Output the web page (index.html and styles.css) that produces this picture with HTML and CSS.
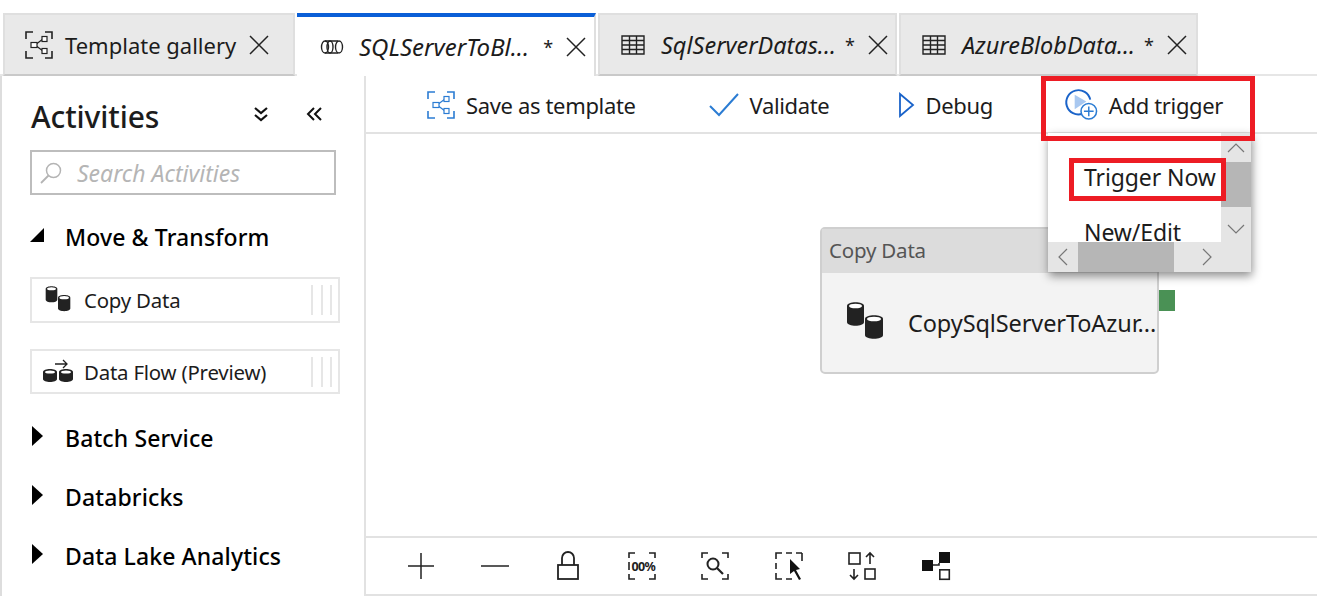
FILE: index.html
```html
<!DOCTYPE html>
<html lang="en">
<head>
<meta charset="utf-8">
<title>Pipeline editor</title>
<link rel="stylesheet" href="styles.css">
</head>
<body>
<svg class="defs" width="0" height="0">
  <defs>
    <symbol id="tpl" viewBox="0 0 28 28">
      <path d="M1 8V1h7M20 1h7v7M27 20v7h-7M8 27H1v-7" fill="none" stroke="currentColor" stroke-width="1.6"/>
      <path d="M10 14l8-6M10 14l8 6" fill="none" stroke="currentColor" stroke-width="1.2"/>
      <rect x="6" y="11.5" width="6" height="5" fill="#fff" stroke="currentColor" stroke-width="1.2"/>
      <rect x="17" y="5.5" width="5" height="5" fill="#fff" stroke="currentColor" stroke-width="1.2"/>
      <rect x="17" y="17.5" width="5" height="5" fill="#fff" stroke="currentColor" stroke-width="1.2"/>
    </symbol>
    <symbol id="close" viewBox="0 0 20 20">
      <path d="M1 1l18 18M19 1L1 19" fill="none" stroke="#222" stroke-width="1.5"/>
    </symbol>
    <symbol id="table" viewBox="0 0 24 20">
      <path d="M1 1h22v18H1zM1 5.500h22M1 10h22M1 14.500h22M8.500 1v18M15.500 1v18" fill="none" stroke="#222" stroke-width="1.400"/>
    </symbol>
    <symbol id="db2" viewBox="0 0 38 38">
      <path d="M1 4c0-5 17-5 17 0v16c0 5-17 5-17 0z" fill="#222"/>
      <ellipse cx="9.500" cy="4" rx="6.500" ry="2.300" fill="#fff"/>
      <path d="M19 17c0-5 18-5 18 0v16c0 5-18 5-18 0z" fill="#222"/>
      <ellipse cx="28" cy="17" rx="7" ry="2.300" fill="#fff"/>
    </symbol>
  </defs>
</svg>

<nav class="tabs">
  <div class="tab tab-gallery">
    <svg class="ic-tpl"><use href="#tpl"/></svg>
    <span class="tab-label tab-label-plain">Template gallery</span>
    <svg class="ic-close"><use href="#close"/></svg>
  </div>
  <div class="tab tab-active">
    <svg class="ic-pipe" viewBox="0 0 24 16">
      <path d="M5 2h13M5 14h13" fill="none" stroke="#222" stroke-width="1.400"/>
      <ellipse cx="5" cy="8" rx="3.500" ry="6" fill="none" stroke="#222" stroke-width="1.400"/>
      <ellipse cx="10" cy="8" rx="3" ry="6" fill="none" stroke="#222" stroke-width="1.400"/>
      <ellipse cx="19" cy="8" rx="3.500" ry="6" fill="none" stroke="#222" stroke-width="1.400"/>
    </svg>
    <span class="tab-label">SQLServerToBl...</span>
    <span class="tab-star">*</span>
    <svg class="ic-close"><use href="#close"/></svg>
  </div>
  <div class="tab tab-data">
    <svg class="ic-table"><use href="#table"/></svg>
    <span class="tab-label">SqlServerDatas...</span>
    <span class="tab-star">*</span>
    <svg class="ic-close"><use href="#close"/></svg>
  </div>
  <div class="tab tab-data">
    <svg class="ic-table"><use href="#table"/></svg>
    <span class="tab-label">AzureBlobData...</span>
    <span class="tab-star">*</span>
    <svg class="ic-close"><use href="#close"/></svg>
  </div>
</nav>

<div class="workspace">
  <aside class="sidebar">
    <header class="side-head">
      <h2 class="side-title">Activities</h2>
      <svg class="ic-expand" viewBox="0 0 16 16"><path d="M2 2l6 5 6-5M2 9l6 5 6-5" fill="none" stroke="#111" stroke-width="2.200"/></svg>
      <svg class="ic-collapse" viewBox="0 0 16 16"><path d="M8 2L2 8l6 6M15 2L9 8l6 6" fill="none" stroke="#111" stroke-width="2"/></svg>
    </header>
    <div class="search">
      <svg class="ic-search" viewBox="0 0 22 22"><circle cx="13.500" cy="8.500" r="7" fill="none" stroke="#b4b4b4" stroke-width="1.500"/><path d="M8.500 13.500L1 21" fill="none" stroke="#b4b4b4" stroke-width="1.800"/></svg>
      <span class="search-text">Search Activities</span>
    </div>
    <div class="group group-open">
      <svg class="ic-tri-open" viewBox="0 0 14 14"><path d="M14 0v14H0z" fill="#000"/></svg>
      <span>Move &amp; Transform</span>
    </div>
    <div class="item item-copy">
      <svg class="ic-db-small"><use href="#db2"/></svg>
      <span class="item-label">Copy Data</span>
      <span class="grip"></span>
    </div>
    <div class="item item-flow">
      <svg class="ic-flow" viewBox="0 0 30 24">
        <path d="M12 5h12M20 1l4 4-4 4" fill="none" stroke="#222" stroke-width="1.300"/>
        <path d="M0 13c0-4 14-4 14 0v7c0 4-14 4-14 0z" fill="#222"/>
        <path d="M16 13c0-4 14-4 14 0v7c0 4-14 4-14 0z" fill="#222"/>
        <ellipse cx="7" cy="13" rx="5" ry="1.600" fill="#fff"/>
        <ellipse cx="23" cy="13" rx="5" ry="1.600" fill="#fff"/>
      </svg>
      <span class="item-label">Data Flow (Preview)</span>
      <span class="grip"></span>
    </div>
    <div class="group group-batch"><svg class="ic-tri" viewBox="0 0 11 20"><path d="M0 0l11 10L0 20z" fill="#000"/></svg><span>Batch Service</span></div>
    <div class="group group-next"><svg class="ic-tri" viewBox="0 0 11 20"><path d="M0 0l11 10L0 20z" fill="#000"/></svg><span>Databricks</span></div>
    <div class="group group-next"><svg class="ic-tri" viewBox="0 0 11 20"><path d="M0 0l11 10L0 20z" fill="#000"/></svg><span>Data Lake Analytics</span></div>
  </aside>

  <main class="editor">
    <div class="toolbar">
      <button class="tool tool-save">
        <svg class="ic-tpl ic-blue"><use href="#tpl"/></svg>
        <span>Save as template</span>
      </button>
      <button class="tool tool-validate">
        <svg class="ic-check" viewBox="0 0 30 24"><path d="M1 13l9 9L29 1" fill="none" stroke="#2b7cd3" stroke-width="2"/></svg>
        <span>Validate</span>
      </button>
      <button class="tool tool-debug">
        <svg class="ic-play" viewBox="0 0 16 24"><path d="M1 1l13 11L1 23z" fill="none" stroke="#1a63c9" stroke-width="1.800"/></svg>
        <span>Debug</span>
      </button>
      <button class="tool tool-trigger">
        <svg class="ic-trigger" viewBox="0 0 34 34">
          <path d="M18 26.500A12.500 12.500 0 1 1 26 12" fill="none" stroke="#1a63c9" stroke-width="2"/>
          <path d="M10 7l12 7-12 8z" fill="#a9c8f0"/>
          <circle cx="24.500" cy="24" r="8" fill="#fff" stroke="#2b7cd3" stroke-width="1.600"/>
          <path d="M24.500 19v10M19.500 24h10" stroke="#2b7cd3" stroke-width="1.500"/>
        </svg>
        <span>Add trigger</span>
      </button>
    </div>

    <div class="canvas">
      <article class="node">
        <div class="node-head">Copy Data</div>
        <div class="node-body">
          <svg class="ic-db-large"><use href="#db2"/></svg>
          <span class="node-name">CopySqlServerToAzur...</span>
        </div>
        <span class="node-port"></span>
      </article>
    </div>

    <div class="zoombar">
      <svg class="zi" viewBox="0 0 28 28"><path d="M14 1v26M1 14h26" fill="none" stroke="#222" stroke-width="1.500"/></svg>
      <svg class="zi" viewBox="0 0 28 28"><path d="M0 14h28" fill="none" stroke="#222" stroke-width="1.500"/></svg>
      <svg class="zi" viewBox="0 0 28 28"><path d="M8 13V6a6 6 0 0 1 12 0v7" fill="none" stroke="#222" stroke-width="1.800"/><rect x="4" y="13" width="20" height="14" fill="none" stroke="#222" stroke-width="1.800"/></svg>
      <svg class="zi" viewBox="0 0 28 28"><path d="M1 6V1h6M21 1h6v5M27 22v5h-6M7 27H1v-5M1 10v8" fill="none" stroke="#222" stroke-width="1.600"/><text class="zi-text" x="3.500" y="18.500">00%</text></svg>
      <svg class="zi" viewBox="0 0 28 28"><path d="M1 6V1h6M21 1h6v5M27 22v5h-6M7 27H1v-5" fill="none" stroke="#222" stroke-width="1.600"/><circle cx="12" cy="12" r="5.500" fill="none" stroke="#222" stroke-width="2"/><path d="M16 16l6 6" stroke="#222" stroke-width="2.200"/></svg>
      <svg class="zi" viewBox="0 0 28 28"><path d="M1 7V1h6M11 1h6M1 11v6M1 21v6h6M11 27h6M27 1v8M21 1h6" fill="none" stroke="#222" stroke-width="1.600"/><path d="M15 7l10 10-4 1 5 9-2 1-5-9-4 3z" fill="#111"/></svg>
      <svg class="zi" viewBox="0 0 28 28"><rect x="1" y="1" width="11" height="11" fill="none" stroke="#222" stroke-width="1.600"/><rect x="17" y="17" width="10" height="10" fill="none" stroke="#222" stroke-width="1.600"/><path d="M22 12V1M18 5l4-4 4 4M6 17v10M2 23l4 4 4-4" fill="none" stroke="#222" stroke-width="1.600"/></svg>
      <svg class="zi" viewBox="0 0 28 28"><rect x="0" y="8" width="11" height="11" fill="#111"/><rect x="17" y="0" width="11" height="11" fill="#111"/><path d="M11 13h6v-2" fill="none" stroke="#222" stroke-width="1.600"/><rect x="17.800" y="17.800" width="9.500" height="9.500" fill="none" stroke="#222" stroke-width="1.600"/></svg>
    </div>
  </main>
</div>

<div class="menu">
  <div class="menu-view">
    <div class="menu-item menu-item-first">Trigger Now</div>
    <div class="menu-item">New/Edit</div>
  </div>
  <div class="vbar">
    <svg class="chev" viewBox="0 0 18 10"><path d="M1 9l8-8 8 8" fill="none" stroke="#777" stroke-width="1.200"/></svg>
    <span class="vthumb"></span>
    <svg class="chev" viewBox="0 0 18 10"><path d="M1 1l8 8 8-8" fill="none" stroke="#777" stroke-width="1.200"/></svg>
  </div>
  <div class="hbar">
    <svg class="chev-h" viewBox="0 0 10 18"><path d="M9 1L1 9l8 8" fill="none" stroke="#777" stroke-width="1.200"/></svg>
    <span class="hthumb"></span>
    <svg class="chev-h" viewBox="0 0 10 18"><path d="M1 1l8 8-8 8" fill="none" stroke="#777" stroke-width="1.200"/></svg>
  </div>
  <div class="corner"></div>
</div>
<div class="callout callout-trigger"></div>
<div class="callout callout-now"></div>
</body>
</html>
```

FILE: styles.css
```css
* { box-sizing: border-box; }
html, body { margin: 0; height: 596px; overflow: hidden; background: #fff; }
body {
  position: relative;
  display: flex;
  flex-direction: column;
  font-family: "Noto Sans", "Open Sans", sans-serif;
  color: #1c1c1c;
  font-size: 22px;
}
.defs { position: absolute; }
svg { display: block; flex: none; overflow: visible; }

/* Tabs */
.tabs {
  display: flex;
  margin-top: 13px;
  height: 63px;
  padding-left: 3px;
  gap: 2px;
  border-bottom: 2px solid #e6e6e6;
}
.tab {
  display: flex;
  align-items: center;
  flex: none;
  height: 63px;
  background: #e9e9e9;
  border: 2px solid #dfdfdf;
  border-bottom-color: #c9c9c9;
}
.tab-gallery { width: 292px; padding-left: 20px; }
.tab-active {
  width: 299px;
  padding-left: 23px;
  background: #fff;
  border: 0;
  border-top: 4px solid #0a5fd7;
  border-right: 2px solid #dfdfdf;
}
.tab-data { width: 299px; padding-left: 21px; }
.tab-label { font-style: italic; font-size: 23.500px; margin-left: 16px; white-space: nowrap; }
.tab-active .tab-label { margin-left: 15px; font-size: 24px; }
.tab-label-plain { font-style: normal; margin-left: 12px; font-size: 22px; }
.tab-star { margin-left: 9px; font-size: 18px; }
.tab-active .tab-star { margin-left: 14px; }
.ic-close { width: 20px; height: 20px; margin-left: 13px; }
.ic-tpl { width: 28px; height: 28px; color: #222; }
.ic-blue { color: #2b7cd3; }
.ic-pipe { width: 24px; height: 16px; }
.ic-table { width: 24px; height: 20px; }

/* Layout */
.workspace { flex: 1; display: flex; min-height: 0; }
.sidebar {
  width: 366px;
  flex: none;
  border-left: 2px solid #dddddd;
  border-right: 2px solid #e2e2e2;
  padding: 0 0 0 28px;
  display: flex;
  flex-direction: column;
}
.side-head { display: flex; align-items: center; height: 74px; padding-top: 6px; }
.side-title { margin: 0; font-size: 30px; font-weight: 500; letter-spacing: -0.1px; width: 223px; padding-left: 1px; }
.ic-expand { width: 16px; height: 16px; margin-top: -4px; }
.ic-collapse { width: 16px; height: 16px; margin-left: 37px; margin-top: -4px; }
.search {
  width: 306px;
  height: 45px;
  border: 2px solid #bdbdbd;
  display: flex;
  align-items: center;
  padding-left: 8px;
  gap: 15px;
}
.ic-search { width: 22px; height: 22px; }
.search-text { font-style: italic; color: #b5b5b5; font-size: 23px; }
.group {
  display: flex;
  align-items: center;
  font-size: 23px;
  font-weight: 500;
  color: #000;
  letter-spacing: 0.12px;
  height: 30px;
  padding-left: 2px;
}
.group span { margin-left: 22px; }
.group-open { margin-top: 27px; padding-left: 0; }
.group-open span { margin-left: 21px; }
.ic-tri-open { width: 14px; height: 14px; margin-top: -5px; }
.ic-tri { width: 11px; height: 20px; margin-top: -4px; }
.group-batch { margin-top: 29px; }
.group-next { margin-top: 29px; }
.item {
  width: 310px;
  height: 46px;
  border: 2px solid #e6e6e6;
  display: flex;
  align-items: center;
  position: relative;
  font-size: 20.400px;
  letter-spacing: -0.2px;
}
.item-copy { margin-top: 25px; padding-left: 13px; }
.item-flow { margin-top: 26px; height: 45px; padding-left: 11px; }
.ic-db-small { width: 26px; height: 26px; margin-top: -2px; }
.ic-flow { width: 30px; height: 24px; margin-top: -2px; }
.item-label { margin-left: 12px; }
.item-copy .item-label { margin-left: 13px; }
.item-flow .item-label { margin-left: 11px; }
.grip {
  margin-left: auto;
  margin-right: 6px;
  width: 21px;
  height: 30px;
  border-left: 2px solid #e6e6e6;
  border-right: 2px solid #e6e6e6;
  background: linear-gradient(#e6e6e6, #e6e6e6) center / 2px 100% no-repeat;
}

/* Editor */
.editor { flex: 1; min-width: 0; display: flex; flex-direction: column; }
.toolbar {
  height: 58px;
  flex: none;
  display: flex;
  align-items: center;
  border-bottom: 2px solid #e2e2e2;
  padding: 1px 0 0 61px;
}
.tool {
  display: flex;
  align-items: center;
  border: 0;
  background: none;
  padding: 0;
  font: inherit;
  color: #1c1c1c;
  letter-spacing: -0.35px;
}
.tool-save { gap: 11px; }
.tool-validate { gap: 11px; margin-left: 73px; }
.tool-debug { gap: 10px; margin-left: 70px; }
.tool-trigger { gap: 11px; margin-left: 72px; }
.ic-check { width: 30px; height: 24px; }
.ic-play { width: 16px; height: 24px; }
.ic-trigger { width: 33px; height: 33px; }

.canvas { flex: 1; position: relative; min-height: 0; }
.node {
  position: absolute;
  left: 454px;
  top: 93px;
  width: 339px;
  height: 147px;
  border: 2px solid #cfcfcf;
  border-radius: 5px;
  background: #f3f3f3;
}
.node-head {
  height: 44px;
  background: #dcdcdc;
  padding-left: 7px;
  line-height: 42px;
  font-size: 20.500px;
  color: #555;
  letter-spacing: -0.2px;
}
.node-body { display: flex; align-items: center; height: 99px; padding: 0 0 0 24px; }
.ic-db-large { width: 38px; height: 38px; margin-top: -4px; }
.node-name { margin-left: 24px; font-size: 23.500px; white-space: nowrap; letter-spacing: -0.1px; }
.node-port {
  position: absolute;
  left: 337px;
  top: 61px;
  width: 16px;
  height: 21px;
  background: #4a9155;
}
.zoombar {
  height: 60px;
  flex: none;
  display: flex;
  align-items: center;
  gap: 45.500px;
  padding: 0 0 0 41px;
  border-top: 2px solid #e2e2e2;
  border-bottom: 2px solid #e2e2e2;
}
.zi { width: 28px; height: 28px; }
.zi-text { font-size: 12.500px; font-weight: 700; fill: #222; letter-spacing: -0.6px; }

/* Dropdown, over the toolbar */
.menu {
  position: absolute;
  left: 1048px;
  top: 133px;
  width: 203px;
  height: 139px;
  display: grid;
  grid-template-columns: 173px 30px;
  grid-template-rows: 109px 30px;
  background: #fff;
  box-shadow: 1px 4px 9px rgba(0, 0, 0, 0.45);
  font-size: 23px;
}
.menu-view { overflow: hidden; padding-left: 36px; }
.menu-item { white-space: nowrap; height: 55px; line-height: 55px; color: #1c1c1c; letter-spacing: -0.1px; }
.menu-item-first { margin-top: 17px; }
.vbar { background: #e5e5e5; display: flex; flex-direction: column; align-items: center; padding: 10px 0 0; }
.vthumb { align-self: stretch; height: 45px; background: #b6b6b6; margin: 9px 0 17px; }
.chev { width: 18px; height: 10px; }
.hbar { background: #e5e5e5; display: flex; align-items: center; }
.hthumb { align-self: stretch; width: 96px; background: #b6b6b6; margin: 0 28px 0 10px; }
.chev-h { width: 10px; height: 18px; }
.chev-h:first-child { margin-left: 10px; }
.corner { background: #e5e5e5; }

/* Annotation rectangles */
.callout { position: absolute; border: 5px solid #ed1c24; pointer-events: none; }
.callout-trigger { left: 1041px; top: 76px; width: 214px; height: 65px; }
.callout-now { left: 1069px; top: 158px; width: 157px; height: 43px; }
```
